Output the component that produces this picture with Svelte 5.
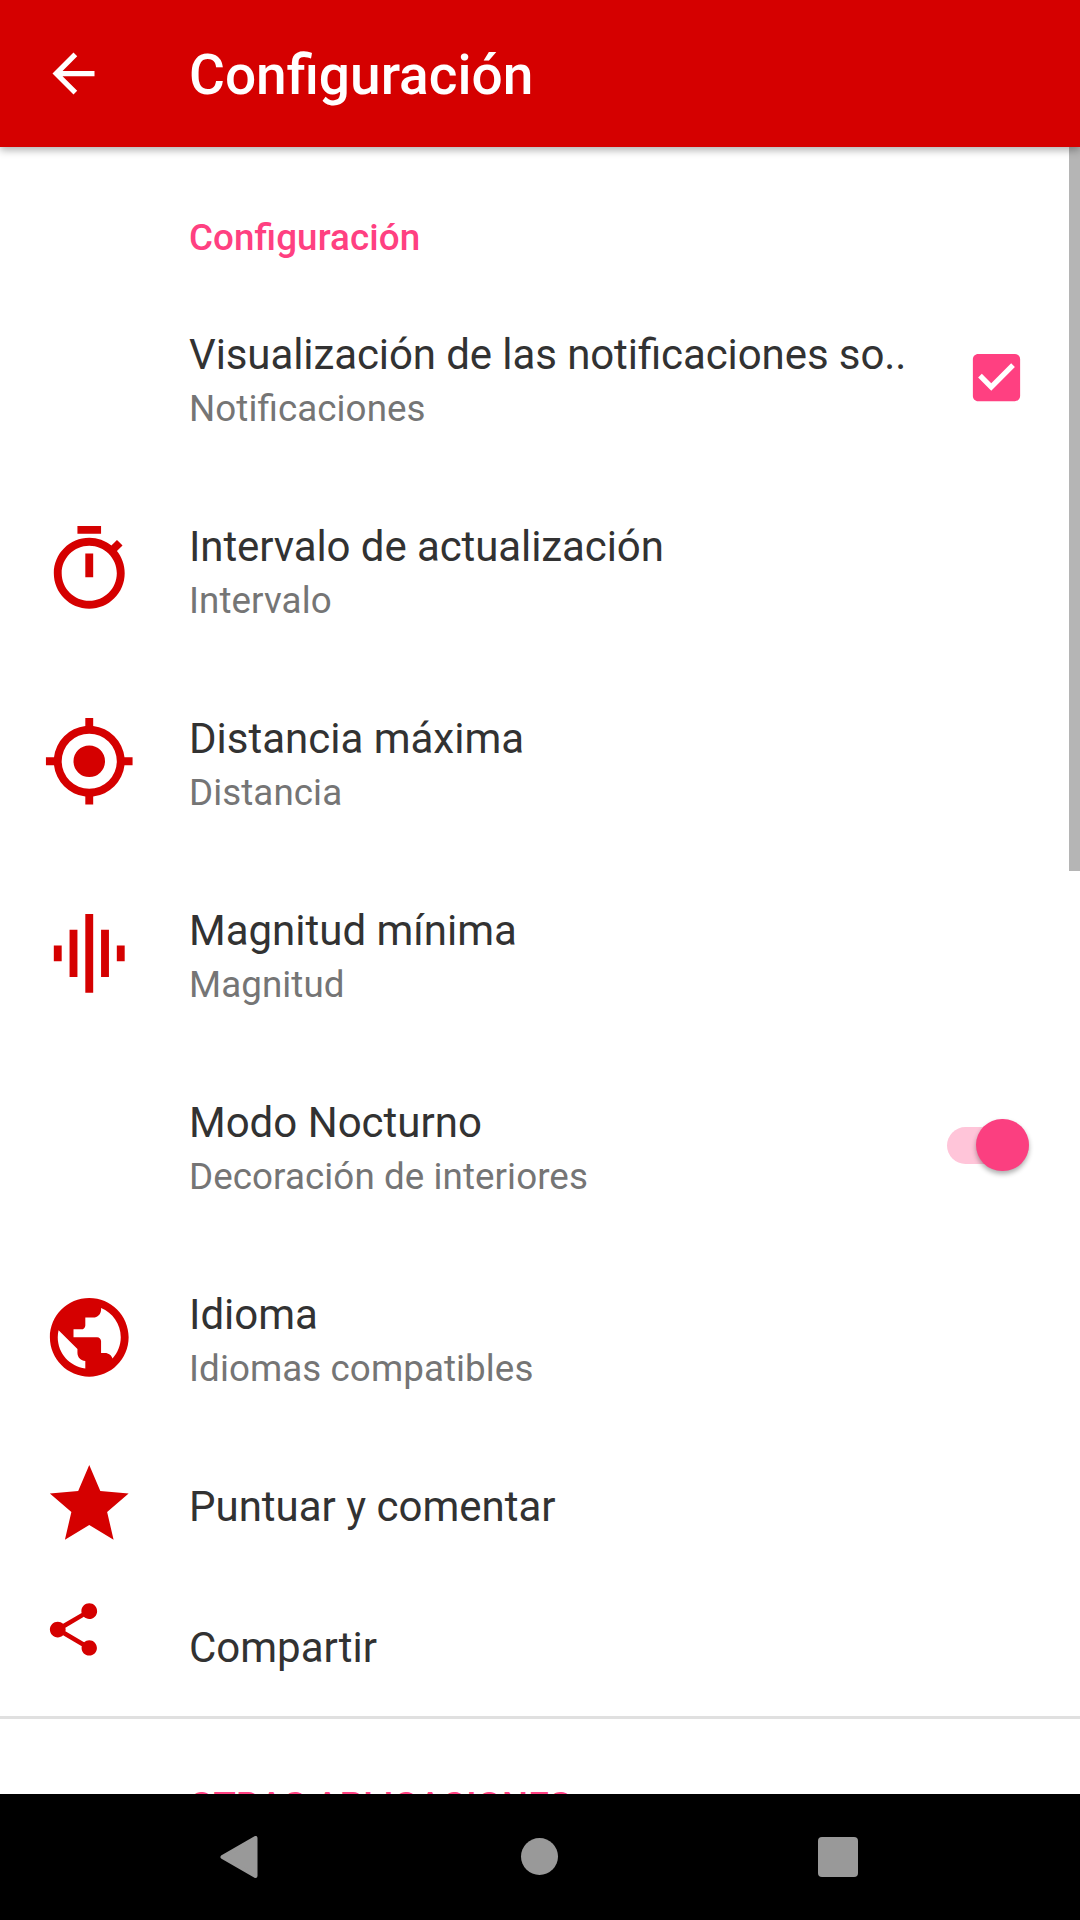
<script>
  let notifications = $state(true);
  let nightMode = $state(true);

  // Material glyphs on a 24x24 grid
  const icons = {
    timer: 'M15 1H9v2h6V1zm-4 13h2V8h-2v6zm8.03-6.61l1.42-1.42c-.43-.51-.9-.99-1.41-1.41l-1.42 1.42C16.07 4.74 14.12 4 12 4c-4.97 0-9 4.03-9 9s4.02 9 9 9 9-4.03 9-9c0-2.12-.74-4.07-1.97-5.61zM12 20c-3.87 0-7-3.13-7-7s3.13-7 7-7 7 3.13 7 7-3.13 7-7 7z',
    location: 'M11 1h2v2.05A9 9 0 0 1 20.95 11H23v2h-2.05A9 9 0 0 1 13 20.95V23h-2v-2.05A9 9 0 0 1 3.05 13H1v-2h2.05A9 9 0 0 1 11 3.05V1zM12 5a7 7 0 1 0 0 14 7 7 0 0 0 0-14zM12 8a4 4 0 1 1 0 8 4 4 0 0 1 0-8z',
    magnitude: 'M7 18h2V6H7v12zm4 4h2V2h-2v20zm-8-8h2v-4H3v4zm12 4h2V6h-2v12zm4-8v4h2v-4h-2z',
    globe: 'M12 2C6.48 2 2 6.48 2 12s4.48 10 10 10 10-4.48 10-10S17.52 2 12 2zm-1 17.93c-3.95-.49-7-3.85-7-7.93 0-.62.08-1.21.21-1.79L9 15v1c0 1.1.9 2 2 2v1.93zm6.9-2.54c-.26-.81-1-1.39-1.9-1.39h-1v-3c0-.55-.45-1-1-1H8v-2h2c.55 0 1-.45 1-1V7h2c1.1 0 2-.9 2-2v-.41c2.93 1.19 5 4.06 5 7.41 0 2.08-.8 3.97-2.1 5.39z',
    star: 'M12 17.27L18.18 21l-1.64-7.03L22 9.24l-7.19-.61L12 2 9.19 8.63 2 9.24l5.46 4.73L5.82 21z',
    share: 'M18 16.08c-.76 0-1.44.3-1.96.77L8.91 12.7c.05-.23.09-.46.09-.7s-.04-.47-.09-.7l7.05-4.11c.54.5 1.25.81 2.04.81 1.66 0 3-1.34 3-3s-1.34-3-3-3-3 1.34-3 3c0 .24.04.47.09.7L8.04 9.81C7.5 9.31 6.79 9 6 9c-1.66 0-3 1.34-3 3s1.34 3 3 3c.79 0 1.5-.31 2.04-.81l7.12 4.16c-.05.21-.08.43-.08.65 0 1.61 1.31 2.92 2.92 2.92s2.92-1.31 2.92-2.92-1.31-2.92-2.92-2.92z'
  };

  const items = [
    { title: 'Visualización de las notificaciones so..', summary: 'Notificaciones', widget: 'checkbox', tight: true },
    { title: 'Intervalo de actualización', summary: 'Intervalo', icon: 'timer', tight: true },
    { title: 'Distancia máxima', summary: 'Distancia', icon: 'location' },
    { title: 'Magnitud mínima', summary: 'Magnitud', icon: 'magnitude' },
    { title: 'Modo Nocturno', summary: 'Decoración de interiores', widget: 'switch' },
    { title: 'Idioma', summary: 'Idiomas compatibles', icon: 'globe' },
    { title: 'Puntuar y comentar', icon: 'star' },
    { title: 'Compartir', icon: 'share', small: true }
  ];
</script>

<div class="screen">
  <header class="toolbar">
    <svg class="back" viewBox="0 0 24 24"><path d="M20 11H7.83l5.59-5.59L12 4l-8 8 8 8 1.41-1.41L7.83 13H20v-2z" /></svg>
    <h1>Configuración</h1>
  </header>

  <main class="list">
    <h2 class="category">Configuración</h2>

    {#each items as item}
      <div class="row" class:single={!item.summary}>
        <div class="icon-frame">
          {#if item.icon}
            <svg class="icon" class:small={item.small} viewBox="0 0 24 24"><path d={icons[item.icon]} /></svg>
          {/if}
        </div>
        <div class="text">
          <div class="title" class:tight={item.tight}>{item.title}</div>
          {#if item.summary}
            <div class="summary">{item.summary}</div>
          {/if}
        </div>
        {#if item.widget === 'checkbox'}
          <button class="widget check" role="checkbox" aria-checked={notifications} aria-label={item.title} onclick={() => (notifications = !notifications)}>
            <svg viewBox="0 0 24 24">
              {#if notifications}
                <path d="M19 3H5c-1.11 0-2 .9-2 2v14c0 1.1.89 2 2 2h14c1.11 0 2-.9 2-2V5c0-1.1-.89-2-2-2zm-9 14l-5-5 1.41-1.41L10 14.17l7.59-7.59L19 8l-9 9z" />
              {:else}
                <path d="M19 5v14H5V5h14m0-2H5c-1.1 0-2 .9-2 2v14c0 1.1.9 2 2 2h14c1.1 0 2-.9 2-2V5c0-1.1-.9-2-2-2z" />
              {/if}
            </svg>
          </button>
        {:else if item.widget === 'switch'}
          <button class="widget switch" class:on={nightMode} role="switch" aria-checked={nightMode} aria-label={item.title} onclick={() => (nightMode = !nightMode)}>
            <span class="thumb"></span>
          </button>
        {/if}
      </div>
    {/each}

    <hr />
    <h2 class="category next">OTRAS APLICACIONES</h2>
    <div class="scrollbar"></div>
  </main>

  <nav class="navbar">
    <div class="key"><svg viewBox="0 0 42 42"><path d="M3.5 21L36.500 2V40z" stroke="#999" stroke-width="4" stroke-linejoin="round" /></svg></div>
    <div class="key"><span class="home"></span></div>
    <div class="key"><span class="recents"></span></div>
  </nav>
</div>

<style>
  :global(body) {
    margin: 0;
    background: #fff;
  }

  .screen {
    width: 1080px;
    height: 1920px;
    display: flex;
    flex-direction: column;
    overflow: hidden;
    background: #fff;
    font-family: Roboto, 'Noto Sans', sans-serif;
    font-feature-settings: 'liga' 1;
  }

  .toolbar {
    position: relative;
    z-index: 1;
    flex: none;
    box-sizing: border-box;
    height: 147px;
    padding-left: 42px;
    display: flex;
    align-items: center;
    gap: 84px;
    background: #d50000;
    color: #fff;
    box-shadow: 0 3px 8px rgba(0, 0, 0, 0.32);
  }

  .back {
    width: 63px;
    height: 63px;
    fill: #fff;
  }

  h1 {
    margin: 3px 0 0;
    font-size: 55px;
    font-weight: 500;
    line-height: 62px;
  }

  .list {
    position: relative;
    flex: 1;
    min-height: 0;
    overflow: hidden;
  }

  .category {
    box-sizing: border-box;
    height: 135px;
    margin: 0;
    padding: 69px 0 0 189px;
    font-size: 36.75px;
    font-weight: 500;
    line-height: 44px;
    letter-spacing: 0.1px;
    color: #ff4081;
  }

  .category.next {
    height: 75px;
    padding-top: 65px;
  }

  .row {
    height: 192px;
    box-sizing: border-box;
    padding: 0 42px 2px;
    display: flex;
    align-items: center;
  }

  .row.single {
    height: 141px;
    padding-bottom: 0;
  }

  .icon-frame {
    flex: none;
    display: flex;
    align-items: flex-start;
    width: 147px;
    height: 94.5px;
  }

  .icon {
    width: 94.5px;
    height: 94.5px;
    fill: #d50000;
  }

  .icon.small {
    width: 63px;
    height: 63px;
  }

  .text {
    flex: 1;
    padding-top: 7px;
    white-space: nowrap;
  }

  .single .text {
    padding-top: 4px;
  }

  .title {
    font-size: 42px;
    line-height: 50px;
    color: #323232;
  }

  .title.tight {
    letter-spacing: -0.09px;
  }

  .summary {
    margin-top: 7px;
    font-size: 36.75px;
    line-height: 44px;
    letter-spacing: 0.08px;
    color: #757575;
  }

  .widget {
    flex: none;
    padding: 0;
    border: 0;
    background: none;
  }

  .check {
    width: 63px;
    height: 63px;
    margin-right: 10.5px;
  }

  .check svg {
    display: block;
    fill: #ff4081;
  }

  .switch {
    width: 82px;
    height: 37px;
    margin-right: 9.500px;
    display: flex;
    align-items: center;
    border-radius: 19px;
    background: #c4c4c4;
  }

  .switch.on {
    justify-content: flex-end;
    background: #ffc5d9;
  }

  .thumb {
    width: 52.5px;
    height: 52.5px;
    flex: none;
    border-radius: 50%;
    background: #f1f1f1;
    box-shadow: 0 3px 5px rgba(0, 0, 0, 0.32);
  }

  .on .thumb {
    background: #fb3f80;
  }

  hr {
    height: 3px;
    margin: 0;
    border: 0;
    background: #e0e0e0;
  }

  .scrollbar {
    position: absolute;
    top: 0;
    right: 0;
    width: 11px;
    height: 724px;
    background: #b5b5b5;
  }

  .navbar {
    flex: none;
    box-sizing: border-box;
    height: 126px;
    padding: 0 2px 1px 0;
    display: flex;
    align-items: center;
    justify-content: center;
    background: #000;
  }

  .key {
    width: 299px;
    display: flex;
    justify-content: center;
  }

  .key svg {
    width: 42px;
    height: 42px;
    fill: #999;
  }

  .home {
    width: 37px;
    height: 37px;
    border-radius: 50%;
    background: #999;
  }

  .recents {
    width: 40px;
    height: 40px;
    border-radius: 4px;
    background: #999;
  }
</style>
